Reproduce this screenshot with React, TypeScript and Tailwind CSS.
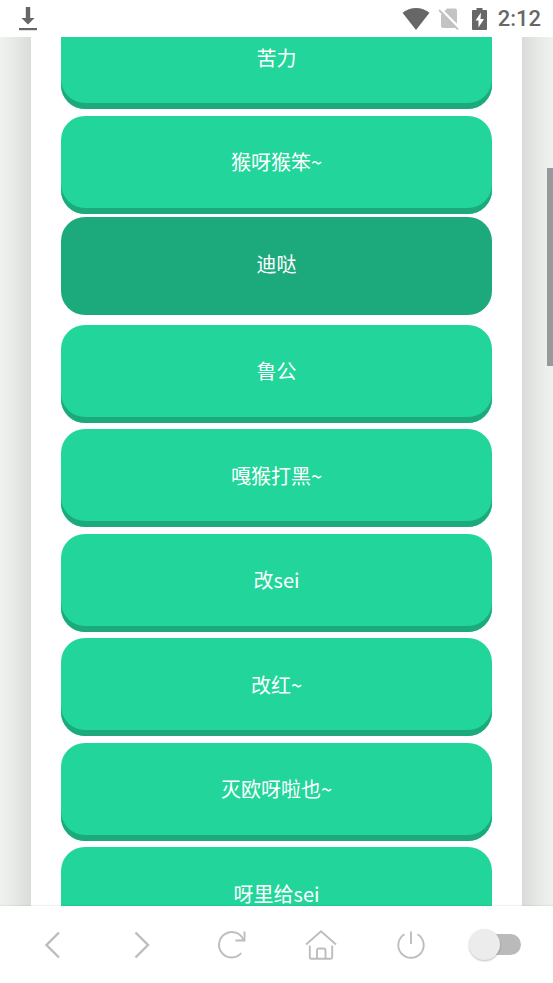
import { useState } from "react"
import type { ReactNode } from "react"

const sounds = [
  "苦力",
  "猴呀猴笨~",
  "迪哒",
  "鲁公",
  "嘎猴打黑~",
  "改sei",
  "改红~",
  "灭欧呀啦也~",
  "呀里给sei",
]

// ─── Status bar ───────────────────────────────────────────────────────────────
function StatusBar() {
  return (
    <header className="flex h-[37px] shrink-0 items-center bg-white pr-3 pl-[19px] text-[#676767]">
      <svg className="h-6 w-[18px]" viewBox="0 0 18 24" fill="currentColor" aria-hidden="true">
        <path d="M6.800 0h4.400v11H15.500L9 17.500 2.500 11h4.300z" />
        <path d="M0 21h18v2.200H0z" />
      </svg>

      <div className="ml-auto flex items-center">
        <svg className="h-[22px] w-7" viewBox="0 0 28 22" fill="currentColor" aria-hidden="true">
          <path d="M.5 4.700C4.500 1.600 9 0 14 0s9.500 1.600 13.500 4.700L14 22z" />
        </svg>
        <svg className="ml-2 h-[22px] w-[22px]" viewBox="0 0 22 22" aria-hidden="true">
          <path d="M9 0.500h8a2 2 0 0 1 2 2V18a2 2 0 0 1-2 2H5a2 2 0 0 1-2-2V7z" fill="#c3c3c3" />
          <path d="M2 .4 21.500 20" stroke="#fff" strokeWidth="2.500" />
          <path d="M1 2 20 21.500" stroke="#c3c3c3" strokeWidth="1.800" />
        </svg>
        <svg className="ml-3 h-[22px] w-[15px]" viewBox="0 0 15 22" fill="currentColor" aria-hidden="true">
          <path d="M4.500 0h6v2H14a1 1 0 0 1 1 1v18a1 1 0 0 1-1 1H1a1 1 0 0 1-1-1V3a1 1 0 0 1 1-1h3.500z" />
          <path d="M9 4.500 3.500 12.500h3V19.500l5.500-8.500H8.500z" fill="#fff" />
        </svg>
        <span className="ml-[11px] pt-px font-['Roboto',sans-serif] text-[22px] leading-6 font-medium">2:12</span>
      </div>
    </header>
  )
}

// ─── Sound button ─────────────────────────────────────────────────────────────
type SoundButtonProps = {
  label: string
  active: boolean
  onPress: () => void
}

function SoundButton({ label, active, onPress }: SoundButtonProps) {
  return (
    <button
      type="button"
      aria-pressed={active}
      onClick={onPress}
      className={`h-[98px] w-full shrink-0 rounded-3xl pb-[5px] text-xl leading-6 text-white ${
        active ? "-translate-y-[3px] bg-[#1ca97c]" : "bg-[#22d59a] shadow-[inset_0_-6px_0_#1ca97c]"
      }`}
    >
      {label}
    </button>
  )
}

// ─── Browser toolbar ──────────────────────────────────────────────────────────
function ToolButton({ label, children }: { label: string; children: ReactNode }) {
  return (
    <button type="button" aria-label={label} className="flex h-12 items-center justify-center">
      <svg
        className="h-8 w-8"
        viewBox="0 0 32 32"
        fill="none"
        stroke="#bdbdbd"
        strokeWidth="1.900"
        aria-hidden="true"
      >
        {children}
      </svg>
    </button>
  )
}

function Toolbar() {
  return (
    <nav className="relative grid h-[77px] shrink-0 grid-cols-6 items-center bg-white px-2 shadow-[0_-1px_1px_#0000000d]">
      <ToolButton label="Back">
        <path d="M22 3.500 9.500 16 22 28.500" strokeWidth="2.400" />
      </ToolButton>
      <ToolButton label="Forward">
        <path d="M9.500 3.500 22 16 9.500 28.500" strokeWidth="2.400" />
      </ToolButton>
      <ToolButton label="Reload">
        <path d="M25.200 24.200A12.700 12.700 0 1 1 27.500 11" />
        <path d="M28.500 2.500V11.500H19.500" />
      </ToolButton>
      <ToolButton label="Home">
        <path d="M1 15.500 16 2.300 31 15.500" />
        <path d="M4.800 16.500V28a1.800 1.800 0 0 0 1.800 1.800h18.800a1.800 1.800 0 0 0 1.800-1.800V16.500" />
        <path d="M12 29.500v-8a2 2 0 0 1 2-2h4.500a2 2 0 0 1 2 2v8" />
      </ToolButton>
      <ToolButton label="Power">
        <path d="M9.500 5.200a12.700 12.700 0 1 0 13 0" />
        <path d="M16 2.500V15" />
      </ToolButton>
      <label className="flex justify-center pr-2.5">
        <span className="relative flex h-8 w-[52px] items-center justify-end">
          <input type="checkbox" aria-label="Desktop mode" className="peer h-[21px] w-10 appearance-none rounded-full bg-[#bababa]" />
          <span className="absolute left-0 h-[31px] w-[31px] rounded-full bg-[#ececec] shadow-[0_1px_2px_#00000040] peer-checked:translate-x-[21px]" />
        </span>
      </label>
    </nav>
  )
}

export default function App() {
  const [active, setActive] = useState(2)

  return (
    <div className="flex h-screen flex-col bg-[#f1f4f1] font-['Noto_Sans_CJK_SC',sans-serif]">
      <StatusBar />

      <main className="relative flex min-h-0 flex-1 flex-col overflow-hidden">
        {/* card is scrolled part-way, so it runs past both edges */}
        <div className="mx-[31px] -my-20 flex flex-1 flex-col justify-between gap-1.5 bg-white px-[30px] pt-[54px] pb-[41px] shadow-[0_0_40px_#00000033]">
          {sounds.map((label, i) => (
            <SoundButton key={label} label={label} active={i === active} onPress={() => setActive(i)} />
          ))}
        </div>

        {/* scroll thumb */}
        <div className="absolute top-[131px] right-0 h-[198px] w-1.5 bg-[#99989c]" />
      </main>

      <Toolbar />
    </div>
  )
}
